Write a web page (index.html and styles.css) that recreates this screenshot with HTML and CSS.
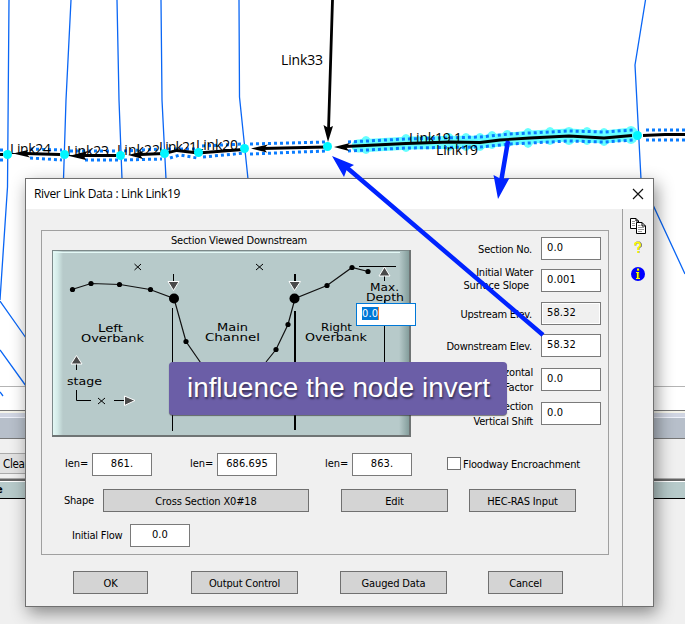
FILE: index.html
```html
<!DOCTYPE html>
<html lang="en">
<head>
<meta charset="utf-8">
<title>River Link Data</title>
<link rel="stylesheet" href="styles.css">
</head>
<body>
<main class="desktop">
  <section class="workspace">
    <div class="map"></div>
    <div class="map-status"></div>
    <div class="splitter"></div>
    <div class="spacer"></div>
    <div class="toolbar"><span class="clear">Clear</span></div>
    <div class="rule"></div>
    <div class="table-head">e</div>
  </section>

  <svg class="network" width="685" height="411" viewBox="0 0 685 411">
    <g fill="none" stroke="#0a66f5" stroke-width="1.3">
      <path d="M9 0L7.5 187 0 300M0 301L26 338M0 350L26 386M0 392L3 396M71 0L66 100 63.500 179M117 0L119 100 122 179M161 0L162 100 166 179M239 0L239.500 97 248 179M645.500 0L635 65 641 179 685 274"/>
    </g>
    <g stroke="#6ff" stroke-width="13" fill="none" stroke-linecap="round">
      <path d="M358 146L410 143 480 142 530 137 569 135 604 137 632 134"/>
    </g>
    <g fill="#6ff">
      <ellipse cx="366" cy="145" rx="6" ry="9"/><ellipse cx="406" cy="143" rx="6" ry="9"/><ellipse cx="449" cy="142" rx="6" ry="9"/><ellipse cx="466" cy="142" rx="6" ry="9"/><ellipse cx="480" cy="142" rx="6" ry="9"/><ellipse cx="492" cy="140" rx="6" ry="9"/><ellipse cx="507" cy="139" rx="6" ry="9"/><ellipse cx="528" cy="138" rx="6" ry="10"/><ellipse cx="550" cy="136" rx="6" ry="9"/><ellipse cx="569" cy="136" rx="7" ry="9"/><ellipse cx="587" cy="136" rx="6" ry="9"/><ellipse cx="604" cy="137" rx="6" ry="9"/><ellipse cx="631" cy="135" rx="7" ry="9"/>
    </g>
    <g fill="none" stroke="#0a7cff" stroke-width="3" stroke-dasharray="3 3">
      <path d="M0 150H3M0 160H3M30 149L62 150M30 158L62 160M70 151L118 151M85 160L120 160M124 151L161 149M124 160L162 159M168 149L195 149M170 158L180 155 197 158M202 146L243 144M203 157L245 153M250 144L326 142M250 154L326 151"/>
      <path d="M348 142L405 139 480 137 510 134 550 132 569 131 604 132 633 130M348 151L405 148 480 147 510 144 550 142 569 141 604 142 633 140M646 130H685M646 140H685"/>
    </g>
    <g class="map-label">
      <text x="10" y="154" textLength="41">Link24</text><text x="67" y="156" textLength="42">Link23</text><text x="117" y="155" textLength="43">Link22</text><text x="159" y="152" textLength="38">Link21</text><text x="196" y="150" textLength="42">Link20</text><text x="281" y="65" textLength="42">Link33</text><text x="409" y="143" textLength="53">Link19.1</text><text x="436" y="155" textLength="42">Link19</text>
    </g>
    <g fill="none" stroke="#000" stroke-width="2.800">
      <path d="M332.500 0L328.500 130M0 154.500H3M25 153.500L60 154.500M82 155.500H116M140 154.500L164 153.500 177 150.500 198 153 243 149.500M262 148.500L326 147M345 146.500L406 143.500 450 142 480 142.500 500 140 530 138 569 136 604 138 632 135.500M643 135.500L665 134.500 685 134.500"/>
    </g>
    <path d="M328 142L323.500 125L328.500 128L333 126ZM13 153.500L28 150L26 153.500L30 157.500ZM69 156L88 151L84 156L86 160ZM128 155L144 151L140 155L143 159ZM251 148.500L268 144.500L264 148.500L267 152.500ZM334 147L350 143L346 147L349 151Z"/>
    <g fill="#00f6ff"><circle cx="7.500" cy="154.500" r="4.500"/><circle cx="64.500" cy="154.500" r="4.500"/><circle cx="120.500" cy="155.500" r="4.500"/><circle cx="164.500" cy="153.500" r="4.500"/><circle cx="198.500" cy="152.500" r="4.500"/><circle cx="244.500" cy="148.500" r="4.500"/><circle cx="327.500" cy="146.500" r="4.500"/><circle cx="637.500" cy="135.500" r="4.500"/></g>
  </svg>

  <section class="dialog">
    <header class="titlebar">
      <h1>River Link Data : Link Link19</h1>
      <svg width="12" height="12" viewBox="0 0 12 12"><path d="M1 1L11 11M11 1L1 11" stroke="#111" stroke-width="1.200"/></svg>
    </header>
    <div class="content">
      <div class="form">
        <div class="group">
          <div class="upper">
            <div class="section-view">
              <h2>Section Viewed Downstream</h2>
              <div class="diagram">
                <svg width="359" height="187" viewBox="52 250 359 187">
                  <defs>
                    <linearGradient id="lit"><stop stop-color="#e3f8f5"/><stop offset=".45" stop-color="#d4ebe8"/><stop offset="1" stop-color="#b7caca"/></linearGradient>
                    <linearGradient id="shade"><stop stop-color="#b7caca"/><stop offset="1" stop-color="#7f9997"/></linearGradient>
                  </defs>
                  <rect x="52" y="250" width="359" height="187" fill="#b7caca"/>
                  <rect x="53" y="251" width="10" height="185" fill="url(#lit)"/>
                  <rect x="399" y="251" width="11" height="185" fill="url(#shade)"/>
                  <path d="M53 252.500H400" stroke="#e3f8f5"/>
                  <path d="M52 250.500H411M52.500 250V437" stroke="#7c8989"/>
                  <path d="M52 436H411M410 250V437" stroke="#6f7474" stroke-width="2"/>
                  <path d="M72 289.500L91 283.500 120 284.500 150 289.500 174 298.500 186 341.500 205 369M266 362L276 349.500 288 324.500 295 298.500 327 285.500 352 267.500 368 271.500" fill="none" stroke="#111" stroke-width="1.200"/>
                  <g><circle cx="72.500" cy="289.500" r="2.600"/><circle cx="91" cy="283.500" r="2.600"/><circle cx="119.500" cy="284.500" r="2.600"/><circle cx="150.500" cy="289.500" r="2.600"/><circle cx="186" cy="341.500" r="2.600"/><circle cx="276" cy="349.500" r="2.600"/><circle cx="288" cy="324.500" r="2.600"/><circle cx="327" cy="285.500" r="2.600"/><circle cx="352" cy="267.500" r="2.600"/><circle cx="368" cy="271.500" r="2.600"/><circle cx="174" cy="298.500" r="5"/><circle cx="294.500" cy="298.500" r="5"/></g>
                  <path d="M172.500 308V431M173.500 274V282M384.500 276V281M384.500 300V364M359 266.500H396M76.500 364V370M76.500 390V400.500H91M114 400.500H124" fill="none" stroke="#000"/>
                  <path d="M295 274V282M295 311V430" stroke="#000" stroke-width="2"/>
                  <path d="M134.500 264L141 270M141 264L134.500 270M256 264L263 270M263 264L256 270M98 398L105 404M105 398L98 404" stroke="#000"/>
                  <g fill="#4a4a4a" stroke="#fff"><path d="M168 281.500H179L173.500 290.500ZM289 281.500H300.500L294.500 290.500ZM379 276H390L384.500 267ZM71 364H82L76.500 355.500ZM124.500 396V405.500L135 400.500Z"/></g>
                  <g class="diagram-label">
                    <text x="98" y="332" textLength="25" lengthAdjust="spacingAndGlyphs">Left</text><text x="81" y="342" textLength="63" lengthAdjust="spacingAndGlyphs">Overbank</text>
                    <text x="217" y="331" textLength="31" lengthAdjust="spacingAndGlyphs">Main</text><text x="205" y="341" textLength="55" lengthAdjust="spacingAndGlyphs">Channel</text>
                    <text x="321" y="331" textLength="31" lengthAdjust="spacingAndGlyphs">Right</text><text x="305" y="341" textLength="62" lengthAdjust="spacingAndGlyphs">Overbank</text>
                    <text x="370" y="291" textLength="29" lengthAdjust="spacingAndGlyphs">Max.</text><text x="366" y="301" textLength="38" lengthAdjust="spacingAndGlyphs">Depth</text>
                    <text x="67" y="385" textLength="35" lengthAdjust="spacingAndGlyphs">stage</text>
                  </g>
                </svg>
                <div class="field depth"><span class="selected">0.0</span></div>
              </div>
            </div>
            <div class="parameters">
              <label>Section No.</label><div class="field">0.0</div>
              <label class="pair water">Initial Water<br><span>Surface Slope</span></label><div class="field">0.001</div>
              <label>Upstream Elev.</label><div class="field readonly">58.32</div>
              <label>Downstream Elev.</label><div class="field">58.32</div>
              <label class="pair">Horizontal<br>Factor</label><div class="field">0.0</div>
              <label class="pair">Section<br>Vertical Shift</label><div class="field">0.0</div>
            </div>
          </div>
          <div class="lengths">
            <label>len=</label><div class="field">861.</div>
            <label>len=</label><div class="field">686.695</div>
            <label>len=</label><div class="field">863.</div>
            <div class="check"><span class="box"></span><span class="check-text">Floodway Encroachment</span></div>
          </div>
          <div class="shape-row">
            <label>Shape</label><button class="cross">Cross Section X0#18</button><button class="edit">Edit</button><button class="wide">HEC-RAS Input</button>
          </div>
          <div class="flow-row"><label>Initial Flow</label><div class="field">0.0</div></div>
        </div>
        <footer class="actions">
          <button>OK</button><button class="wide">Output Control</button><button class="wide">Gauged Data</button><button>Cancel</button>
        </footer>
      </div>
      <aside class="tools">
        <svg width="18" height="18" viewBox="0 0 18 18"><g fill="#fff" stroke="#000"><path d="M1.500 1.500H7L9.500 4V11.500H1.500Z"/><path d="M7.500 5.500H13L16.500 9V16.500H7.500Z"/></g><path d="M13 5.500V9H16.500M7 1.500V4H9.500" fill="none" stroke="#000"/><path d="M3 4.500H6M3 6.500H6M3 8.500H6M9 8.500H11.500M9 10.500H15M9 12.500H15M9 14.500H13" stroke="#999"/></svg>
        <svg width="10" height="13" viewBox="0 0 10 13"><path d="M2.500 4.500V2.500L4 1.500H6.500L8 3V5L5.500 7V9M5.500 10V12" fill="none" stroke="#777" stroke-width="1.800"/><path d="M2 4.500V2.500L3.500 1.500H6L7 3V5L5 7V9M5 10V12" fill="none" stroke="#ff0" stroke-width="1.700"/></svg>
        <svg width="14" height="14" viewBox="0 0 14 14"><circle cx="7" cy="7" r="7" fill="#00f"/><path d="M6 2H8.500V4H6ZM5.500 5H8.500V11.500H5.500Z" fill="#660"/><path d="M6 1.500H8V3.500H6ZM5 5H8V6H7.500V11H9V12H5V11H6V6H5Z" fill="#ff0"/></svg>
      </aside>
    </div>
  </section>

  <svg class="pointers" width="685" height="624" viewBox="0 0 685 624">
    <path d="M543 335L345 166M508 141L501 182" stroke="#0023ff" stroke-width="4.500"/>
    <path d="M332 156L354 165L347 169L344 177ZM498 199L493.500 175L501 179L509.500 178Z" fill="#0023ff"/>
  </svg>
  <div class="callout"><svg width="338" height="53" viewBox="0 0 338 53"><text x="18" y="35" textLength="303" lengthAdjust="spacingAndGlyphs">influence the node invert</text></svg></div>
</main>
</body>
</html>
```
FILE: styles.css
```css
* { box-sizing: border-box; }
body { margin: 0; font: 11px/13px "DejaVu Sans Condensed", "DejaVu Sans", sans-serif; font-stretch: condensed; letter-spacing: -.22px; color: #000; }
h1, h2 { margin: 0; font-weight: normal; }
svg { display: block; flex: none; letter-spacing: 0; }
.desktop { position: relative; width: 685px; height: 624px; overflow: hidden; background: #f0f0f0; }
.workspace { display: flex; flex-direction: column; }
.map { height: 387px; background: #fff; border-bottom: 1px solid #b4b4b4; }
.map-status { height: 24px; background: #fff; border-bottom: 1px solid #777; }
.splitter { height: 28px; background: linear-gradient(#f5f4ea 0 2px, #d0d5e2 2px 6px, #eef1fa 6px 7px, #b7bfca 7px); border-bottom: 1px solid #777; }
.spacer { height: 14px; }
.toolbar { width: 100px; height: 21px; border: 1px solid #aaa; border-left: 0; background: #e2e2e2; }
.clear { display: block; padding: 4px 0 0 3px; font-size: 11.5px; letter-spacing: -.3px; }
.rule { height: 7px; border-top: 1px solid #f0f0f0; background: linear-gradient(#f0f0f0 0 3px, #aaa 3px 4px, #666 4px); }
.table-head { height: 18px; border-top: 1px solid #fff; border-bottom: 1px solid #000; background: #b7caca; font-weight: bold; line-height: 16px; text-indent: -4px; }
.network, .pointers { position: absolute; top: 0; left: 0; }
.map-label { font: 14px "Open Sans", sans-serif; }
.dialog { position: absolute; left: 25px; top: 178px; width: 629px; height: 429px; border: 1px solid #707070; background: #f0f0f0; box-shadow: 3px 6px 16px rgba(0,0,0,.43); }
.titlebar { display: flex; justify-content: space-between; align-items: center; height: 30px; padding: 0 9px 0 8px; background: #fff; }
.titlebar h1 { font: 12px/16px "Open Sans", sans-serif; letter-spacing: -.33px; }
.content { display: flex; height: 397px; }
.form { width: 596px; padding: 21px 13px 0 15px; }
.group { height: 325px; border: 1px solid #a0a0a0; }
.upper { display: flex; height: 222px; }
.section-view { width: 369px; padding: 3px 0 0 10px; }
.section-view h2 { width: 374px; margin-bottom: 3px; font-size: 11px; line-height: 13px; text-align: center; }
.diagram { position: relative; }
.diagram-label { font: 10px "DejaVu Sans", sans-serif; }
.field { flex: none; width: 60px; height: 23px; padding: 2px 5px; border: 1px solid #7a7a7a; background: #fff; line-height: 15px; letter-spacing: .1px; white-space: nowrap; }
.depth { position: absolute; left: 304px; top: 53px; border-color: #0078d7; }
.selected { display: inline-block; height: 13px; background: #0078d7; color: #fff; line-height: 13px; border-right: 1px solid #f08030; }
.readonly { background: #f0f0f0; box-shadow: inset 0 0 0 1px #fff; }
.parameters { display: grid; grid-template-columns: 121px 60px; grid-template-rows: 32px 33px 32px 34px 34px 23px; column-gap: 9px; align-items: start; padding-top: 6px; }
.parameters label { padding-top: 6px; text-align: right; white-space: nowrap; }
.parameters .pair { padding-top: 0; margin: -3px -1px 0 0; line-height: 15px; }
.parameters .water { line-height: 13px; }
.water span { margin-right: 4px; }
.lengths, .shape-row, .flow-row { display: flex; }
.lengths { padding-left: 23px; height: 36px; }
.lengths label { width: 22px; margin-right: 5px; padding-top: 4px; letter-spacing: 0; }
.lengths .field { margin-right: 38px; text-align: center; }
.lengths .field:nth-of-type(2) { margin-right: 48px; }
.check { display: flex; margin-left: -3px; }
.box { width: 14px; height: 13px; margin-top: 4px; border: 1px solid #707070; background: #fff; }
.check-text { margin: 5px 0 0 2px; white-space: nowrap; }
.shape-row { padding-left: 22px; height: 35px; }
.shape-row label { width: 39px; padding-top: 5px; }
button { flex: none; width: 75px; height: 23px; padding: 1px 0 0; border: 1px solid #707070; background: #d4d4d4; font: inherit; letter-spacing: -.15px; color: #000; }
button.wide, .edit { width: 107px; }
button.cross { width: 206px; margin-right: 32px; }
.edit { margin-right: 21px; }
.flow-row { padding-left: 30px; }
.flow-row label { width: 58px; padding-top: 5px; }
.flow-row .field { text-align: center; }
.actions { display: flex; padding: 16px 0 0 32px; }
.actions button { margin-right: 43px; }
.actions button:nth-child(2) { margin-right: 42px; }
.actions button:nth-child(3) { margin-right: 41px; }
.tools { display: flex; flex-direction: column; align-items: center; width: 31px; border-left: 1px solid #a0a0a0; padding-top: 8px; gap: 6px; }
.tools svg:nth-child(2) { margin-bottom: 7px; }
.callout { position: absolute; left: 169px; top: 362px; width: 338px; height: 53px; border-radius: 4px; background: #6b5ea7; box-shadow: 0 1px 1px rgba(50,50,50,.65); font: 27px "Liberation Sans", sans-serif; fill: #fff; }
.callout text { text-shadow: 1px 2px 2px rgba(0,0,0,.5); }
```
